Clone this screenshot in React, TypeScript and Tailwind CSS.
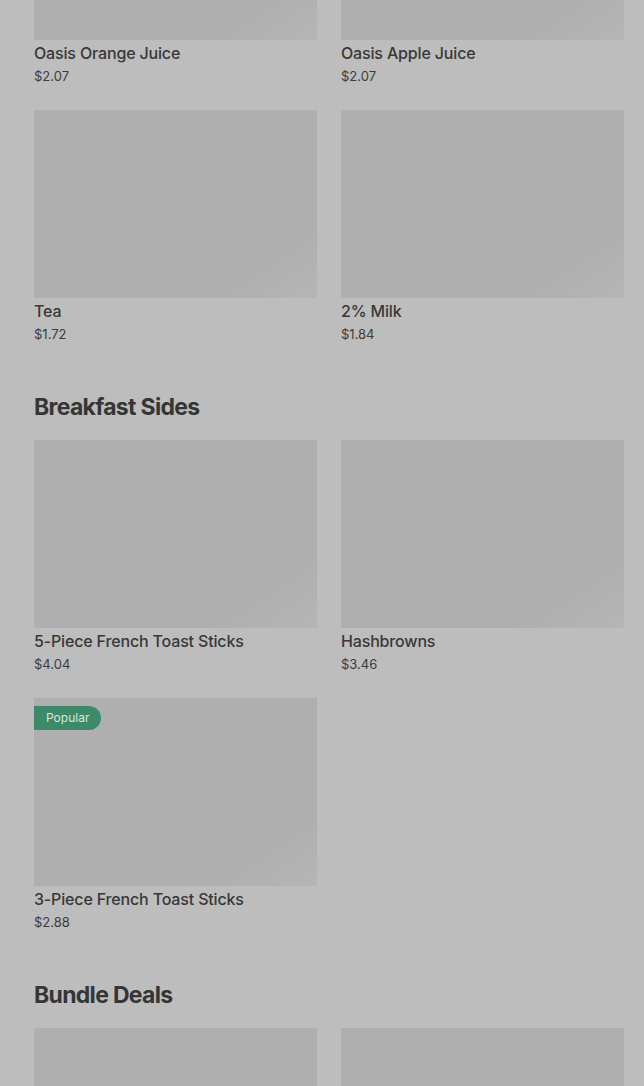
type Item = {
  name?: string;
  price?: string;
  popular?: boolean;
};

type Section = {
  title?: string;
  items: Item[];
};

const sections: Section[] = [
  {
    items: [
      { name: "Oasis Orange Juice", price: "$2.07" },
      { name: "Oasis Apple Juice", price: "$2.07" },
      { name: "Tea", price: "$1.72" },
      { name: "2% Milk", price: "$1.84" },
    ],
  },
  {
    title: "Breakfast Sides",
    items: [
      { name: "5-Piece French Toast Sticks", price: "$4.04" },
      { name: "Hashbrowns", price: "$3.46" },
      { name: "3-Piece French Toast Sticks", price: "$2.88", popular: true },
    ],
  },
  {
    title: "Bundle Deals",
    items: [{}, {}],
  },
];

function MenuCard({ item }: { item: Item }) {
  return (
    <div className="flex flex-col">
      <div className="relative h-[188px] w-full bg-gradient-to-br from-[#afafaf] via-[#afafaf] via-80% to-[#b5b5b5]">
        {item.popular && (
          <span className="absolute left-0 top-2 flex h-6 items-center rounded-r-full bg-[#3d8a68] pl-3 pr-3 text-[12px] text-[#d6e8dd]">
            Popular
          </span>
        )}
      </div>
      {item.name && (
        <div className="mt-[3px] text-[16px] leading-5 font-medium tracking-[-0.01em] text-[#383838]">
          {item.name}
        </div>
      )}
      {item.price && (
        <div className="mt-[3px] text-[13px] leading-5 text-[#3c3c3c]">
          {item.price}
        </div>
      )}
    </div>
  );
}

export default function App() {
  return (
    <div
      className="h-[1086px] overflow-hidden bg-[#bdbdbd]"
      style={{ fontFamily: "Inter, 'Noto Sans', sans-serif" }}
    >
      <div className="-mt-[148px] flex flex-col gap-[47px] pl-[34px] pr-[20px]">
        {sections.map((section, i) => (
          <div key={i} className="flex flex-col gap-[17px]">
            {section.title && (
              <h2 className="text-[23px] leading-8 font-bold tracking-[-0.03em] text-[#353535]">
                {section.title}
              </h2>
            )}
            <div className="grid grid-cols-2 gap-x-6 gap-y-6">
              {section.items.map((item, j) => (
                <MenuCard key={j} item={item} />
              ))}
            </div>
          </div>
        ))}
      </div>
    </div>
  );
}
